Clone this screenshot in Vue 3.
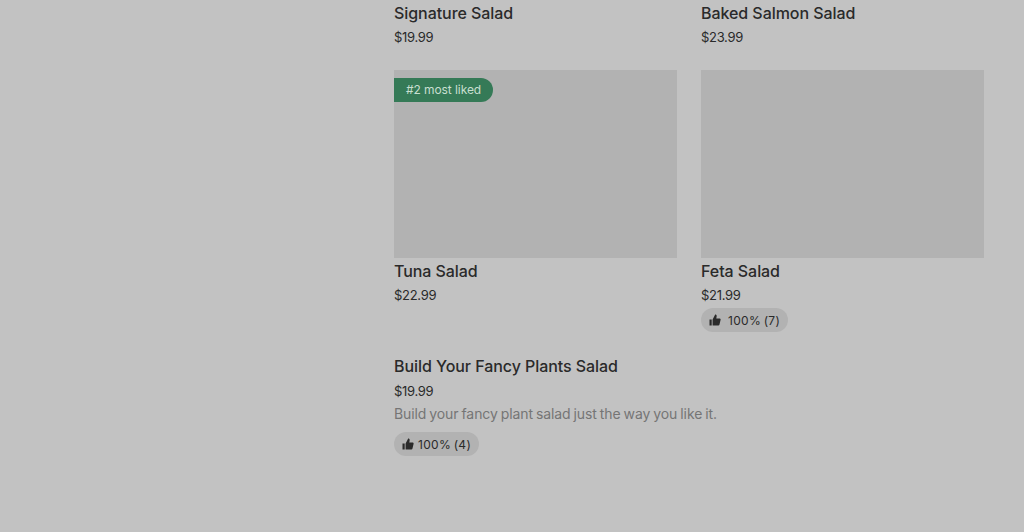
<script setup>
const items = [
  { name: "Signature Salad", price: "$19.99", noImage: true },
  { name: "Baked Salmon Salad", price: "$23.99", noImage: true },
  { name: "Tuna Salad", price: "$22.99", badge: "#2 most liked" },
  { name: "Feta Salad", price: "$21.99", rating: "100% (7)" },
];
</script>

<template>
  <main class="page">
    <section class="grid">
      <article v-for="item in items" :key="item.name" class="card">
        <div v-if="!item.noImage" class="photo">
          <span v-if="item.badge" class="badge">{{ item.badge }}</span>
        </div>
        <h3 class="name">{{ item.name }}</h3>
        <p class="price">{{ item.price }}</p>
        <span v-if="item.rating" class="pill wide">
          <svg class="thumb" viewBox="0 0 12 12"><path d="M0.5 5.5h2.2v6H0.5zM3.6 11.5V5.4L6.2 0.6c1 0 1.5.6 1.5 1.5L7.3 4.4h3.2c.8 0 1.3.6 1.1 1.4l-1.1 4.8c-.1.6-.6.9-1.2.9z"/></svg>
          {{ item.rating }}
        </span>
      </article>
    </section>
    <article class="card full">
      <h3 class="name">Build Your Fancy Plants Salad</h3>
      <p class="price">$19.99</p>
      <p class="desc">Build your fancy plant salad just the way you like it.</p>
      <span class="pill">
        <svg class="thumb" viewBox="0 0 12 12"><path d="M0.5 5.5h2.2v6H0.5zM3.6 11.5V5.4L6.2 0.6c1 0 1.5.6 1.5 1.5L7.3 4.4h3.2c.8 0 1.3.6 1.1 1.4l-1.1 4.8c-.1.6-.6.9-1.2.9z"/></svg>
        100% (4)
      </span>
    </article>
  </main>
</template>

<style scoped>
.page {
  box-sizing: border-box;
  width: 1024px;
  height: 532px;
  overflow: hidden;
  padding: 3px 40px 0 394px;
  background: #c2c2c2;
  font-family: Inter, "Liberation Sans", sans-serif;
  color: #2a2a2a;
}
.grid {
  display: grid;
  grid-template-columns: 283px 283px;
  column-gap: 24px;
  row-gap: 23px;
}
.card {
  display: flex;
  flex-direction: column;
  align-items: flex-start;
}
.full {
  margin-top: 24px;
}
.photo {
  width: 100%;
  height: 188px;
  margin-bottom: 3px;
  padding-top: 8px;
  box-sizing: border-box;
  background: #b2b2b2;
}
.badge {
  display: inline-block;
  height: 24px;
  padding: 0 12px;
  border-radius: 0 12px 12px 0;
  background: #357a57;
  color: #c8dfd0;
  font-size: 12px;
  line-height: 24px;
  letter-spacing: -0.08px;
}
.name {
  margin: 0;
  font-size: 16px;
  line-height: 20px;
  font-weight: 500;
  letter-spacing: -0.06px;
}
.price {
  margin: 4px 0 0;
  font-size: 13px;
  line-height: 20px;
  letter-spacing: -0.3px;
}
.full .price {
  margin-top: 5px;
}
.desc {
  margin: 3px 0 0;
  font-size: 14px;
  line-height: 20px;
  letter-spacing: -0.1px;
  word-spacing: -0.8px;
  color: #757575;
}
.pill {
  display: inline-flex;
  align-items: center;
  gap: 4px;
  height: 24px;
  margin-top: 8px;
  padding: 0 8px;
  border-radius: 12px;
  background: #b2b2b2;
  font-size: 12px;
  letter-spacing: 0.3px;
  word-spacing: -1px;
}
.wide {
  gap: 7px;
  margin-top: 3px;
}
.thumb {
  width: 12px;
  height: 12px;
  fill: #2a2a2a;
}
</style>
